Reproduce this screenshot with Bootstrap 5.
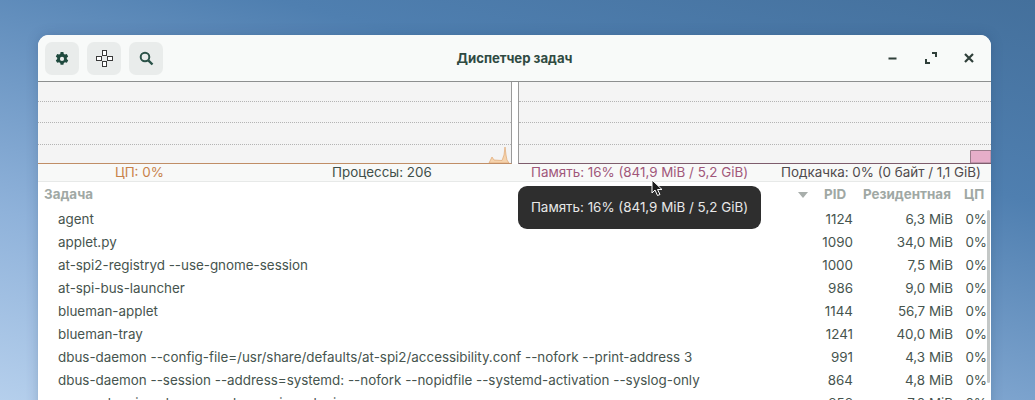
<!DOCTYPE html>
<html lang="ru"><head><meta charset="utf-8"><title>Диспетчер задач</title>
<link href="https://cdn.jsdelivr.net/npm/bootstrap@5.3.0/dist/css/bootstrap.min.css" rel="stylesheet">
<style>
html,body{height:400px;overflow:hidden;margin:0}
body{background:linear-gradient(195deg,#44709c 0%,#4f7fb0 30%,#8fb2da 72%,#b5cfec 100%);font-family:Inter,"Noto Sans",sans-serif;position:relative}
.desk-win{position:absolute;left:38px;top:35px;width:953px;height:420px;background:#fff;border-radius:11px 11px 0 0;overflow:hidden;color:#3b4a45;font-size:13.4px;box-shadow:0 0 12px rgba(30,60,100,.25)}
.win-head{height:47px;background:#f8faf9;border-bottom:1px solid #8d8f8f;padding:7px 7px 6px}
.tool-btn{width:34px;height:33px;border-radius:7px;background:#e9eceb;border:0;padding:0;display:flex;align-items:center;justify-content:center}
.win-title{position:absolute;left:0;right:0;top:14px;text-align:center;font-weight:700;font-size:13.2px;color:#2f4a42}
.ctl{position:absolute;top:16px;width:14px;height:14px}
.graphs{height:82px;gap:6px;background:#fff}
.graph-box{flex:1;height:82px;background:#f4f4f4;position:relative;border-bottom:1px solid #7a6a70}
.graph-box.cpu{border-right:1px solid #9a9a9a;border-bottom-color:#c08e66}
.graph-box.mem{border-left:1px solid #9a9a9a;border-bottom-color:#7e5d6d}
.grid-line{height:0;border-top:1px dotted #b4b4b4;position:absolute;left:0;right:0}
.graph-box svg{position:absolute;right:0;bottom:0}
.stat-row{height:18px;background:#f8f9f8;border-bottom:1px solid #e7e9e8;font-size:13.4px;line-height:17px;position:relative}
.stat-row span{position:absolute;top:0;white-space:nowrap}
.col-heads{height:25px;font-weight:700;font-size:13.4px;color:#a0a8a4;position:relative;line-height:24px}
.col-heads span{position:absolute;top:0}
.proc-row{height:23px;line-height:25px;position:relative;white-space:nowrap;color:#46544e;font-size:13.4px}
.proc-name{position:absolute;left:20px}
.proc-pid{position:absolute;right:138px}
.proc-res{position:absolute;right:38px}
.proc-cpu{position:absolute;right:4px}
.thumb{position:absolute;right:1px;top:175px;width:3px;height:173px;background:#c3c7c6;border-radius:2px}
.hint{position:absolute;left:518px;top:186px;width:243px;height:43px;background:#2e2e2e;border-radius:9px;color:#e8e8e8;font-size:13.4px;line-height:43px;text-align:center;z-index:3}
.pointer{position:absolute;left:651px;top:179px;z-index:4}
</style></head>
<body>
<div class="desk-win">
  <div class="win-head d-flex gap-2">
    <button class="tool-btn" aria-label="Настройки"><svg width="16" height="16" viewBox="0 0 16 16"><path fill="#1f4a3e" fill-rule="evenodd" d="M6.600 1h2.800l.4 1.900 1.200.7 1.800-.6 1.400 2.400-1.400 1.300v1.400l1.400 1.300-1.400 2.400-1.800-.6-1.200.7-.4 1.900H6.600l-.4-1.900-1.200-.7-1.800.6L1.800 9.400l1.400-1.300V6.700L1.800 5.400l1.400-2.400 1.800.6 1.200-.7zM8 5.800a2.100 2.100 0 1 0 0 4.200 2.100 2.100 0 0 0 0-4.200z"/></svg></button>
    <button class="tool-btn" aria-label="Курсор"><svg width="17" height="17" viewBox="0 0 17 17" fill="#fff" stroke="#3a3a3a" stroke-width="1"><rect x="6.500" y=".5" width="4" height="5"/><rect x="6.500" y="11.500" width="4" height="5"/><rect x=".5" y="6.500" width="5" height="4"/><rect x="11.500" y="6.500" width="5" height="4"/></svg></button>
    <button class="tool-btn" aria-label="Поиск"><svg width="15" height="15" viewBox="0 0 15 15" fill="none" stroke="#2b5248" stroke-width="2"><circle cx="6" cy="6" r="4.300"/><path d="M9.300 9.300l4.200 4.200" stroke-width="2.400"/></svg></button>
  </div>
  <div class="win-title">Диспетчер задач</div>
  <svg class="ctl" style="left:848px" viewBox="0 0 14 14"><path d="M2.500 7.500h8" stroke="#2f3f3a" stroke-width="2"/></svg>
  <svg class="ctl" style="left:886px" viewBox="0 0 14 14" fill="none" stroke="#2f3f3a" stroke-width="2"><path d="M8 2h4v4M6 12H2V8"/></svg>
  <svg class="ctl" style="left:924px" viewBox="0 0 14 14"><path d="M3 3l8 8M11 3l-8 8" stroke="#2f3f3a" stroke-width="2.200"/></svg>

  <div class="graphs d-flex">
    <div class="graph-box cpu">
      <div class="grid-line" style="top:19px"></div><div class="grid-line" style="top:40px"></div><div class="grid-line" style="top:62px"></div>
      <svg width="24" height="18" viewBox="0 0 24 18"><path d="M2 18l1-2 2-4 2 3 8 .5 2-5.500 1-8 1 8 1 5 2 3z" fill="#f5d3ad" stroke="#dfa873" stroke-width=".7"/></svg>
    </div>
    <div class="graph-box mem">
      <div class="grid-line" style="top:19px"></div><div class="grid-line" style="top:40px"></div><div class="grid-line" style="top:62px"></div>
      <svg width="21" height="13" viewBox="0 0 21 13"><path d="M.5 13V.5H21V13z" fill="#e6aec9" stroke="#9a7b8a"/></svg>
    </div>
  </div>
  <div class="stat-row">
    <span style="left:77px;color:#c8824a">ЦП: 0%</span>
    <span style="left:294px;color:#3f4f49">Процессы: 206</span>
    <span style="left:493px;color:#a0577a">Память: 16% (841,9 MiB / 5,2 GiB)</span>
    <span style="left:743px;color:#4f4a4c">Подкачка: 0% (0 байт / 1,1 GiB)</span>
  </div>
  <div class="col-heads">
    <span style="left:6px">Задача</span>
    <svg style="position:absolute;left:760px;top:10px" width="10" height="6" viewBox="0 0 10 6"><path d="M0 0h10L5 6z" fill="#a8aeab"/></svg>
    <span style="left:786px">PID</span><span style="left:825px">Резидентная</span><span style="left:926px">ЦП</span>
  </div>
  <div class="proc-row"><span class="proc-name">agent</span><span class="proc-pid">1124</span><span class="proc-res">6,3 MiB</span><span class="proc-cpu">0%</span></div>
  <div class="proc-row"><span class="proc-name">applet.py</span><span class="proc-pid">1090</span><span class="proc-res">34,0 MiB</span><span class="proc-cpu">0%</span></div>
  <div class="proc-row"><span class="proc-name">at-spi2-registryd --use-gnome-session</span><span class="proc-pid">1000</span><span class="proc-res">7,5 MiB</span><span class="proc-cpu">0%</span></div>
  <div class="proc-row"><span class="proc-name">at-spi-bus-launcher</span><span class="proc-pid">986</span><span class="proc-res">9,0 MiB</span><span class="proc-cpu">0%</span></div>
  <div class="proc-row"><span class="proc-name">blueman-applet</span><span class="proc-pid">1144</span><span class="proc-res">56,7 MiB</span><span class="proc-cpu">0%</span></div>
  <div class="proc-row"><span class="proc-name">blueman-tray</span><span class="proc-pid">1241</span><span class="proc-res">40,0 MiB</span><span class="proc-cpu">0%</span></div>
  <div class="proc-row"><span class="proc-name">dbus-daemon --config-file=/usr/share/defaults/at-spi2/accessibility.conf --nofork --print-address 3</span><span class="proc-pid">991</span><span class="proc-res">4,3 MiB</span><span class="proc-cpu">0%</span></div>
  <div class="proc-row"><span class="proc-name">dbus-daemon --session --address=systemd: --nofork --nopidfile --systemd-activation --syslog-only</span><span class="proc-pid">864</span><span class="proc-res">4,8 MiB</span><span class="proc-cpu">0%</span></div>
  <div class="proc-row"><span class="proc-name">gnome-keyring-daemon --daemonize --login</span><span class="proc-pid">858</span><span class="proc-res">7,0 MiB</span><span class="proc-cpu">0%</span></div>
  <div class="thumb"></div>
</div>
<div class="hint">Память: 16% (841,9 MiB / 5,2 GiB)</div>
<svg class="pointer" width="13" height="18" viewBox="0 0 13 18"><path d="M1 1v13l3-3 2.500 5.500 2.500-1L6.500 10.500H11z" fill="#1c1c1c" stroke="#fff" stroke-width="1"/></svg>
</body></html>
